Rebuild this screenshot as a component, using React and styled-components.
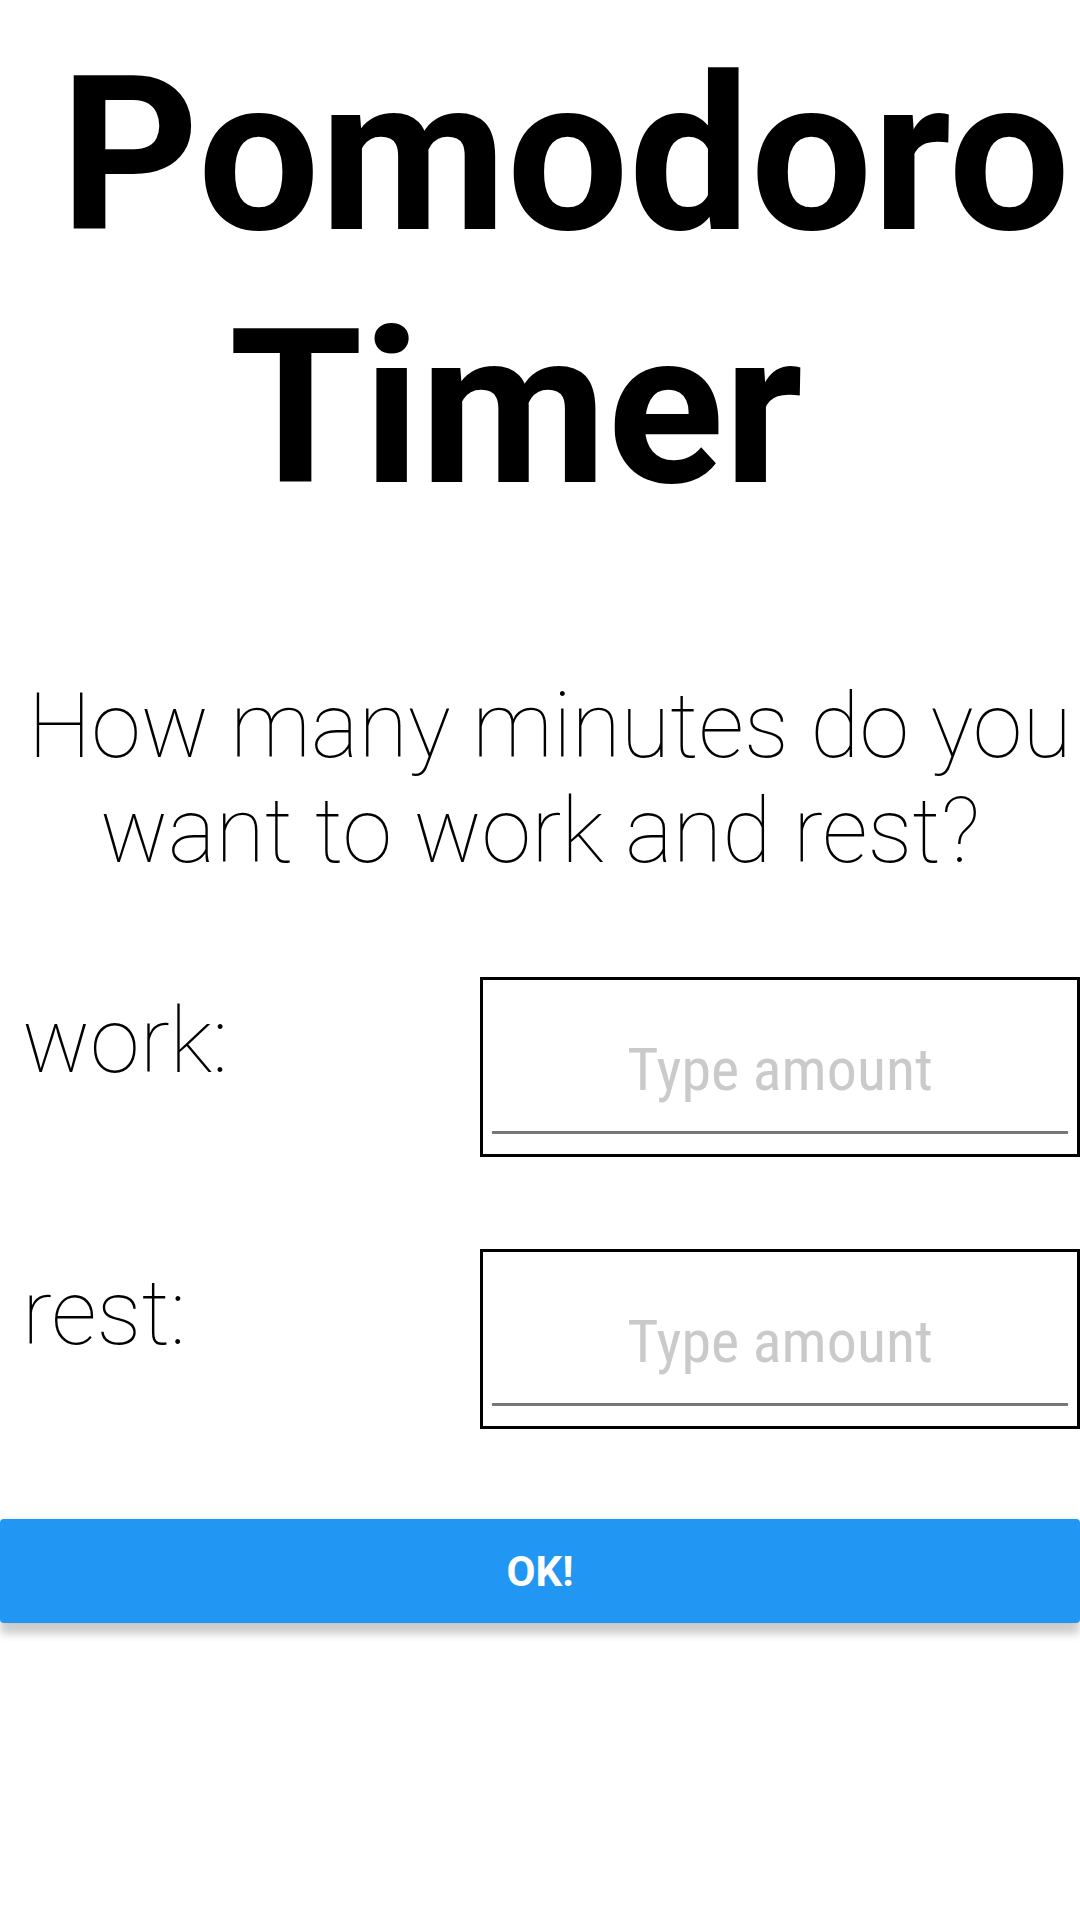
import styled, { createGlobalStyle } from "styled-components";

const GlobalStyle = createGlobalStyle`
  html, body {
    margin: 0;
    padding: 0;
    overflow-x: hidden;
    background: #fff;
    font-family: Roboto, "Liberation Sans", sans-serif;
  }
`;

function AmountRow({ label }) {
  return (
    <Row>
      <Label>{label}</Label>
      <InputFrame>
        <AmountInput type="number" placeholder="Type amount" />
      </InputFrame>
    </Row>
  );
}

function App() {
  return (
    <Page>
      <GlobalStyle />
      <Title>Pomodoro Timer</Title>
      <Question>
        How many minutes do you
        <br />
        want to work and rest?
      </Question>
      <Form>
        <AmountRow label="work:" />
        <AmountRow label="rest:" />
      </Form>
      <OkButton>OK!</OkButton>
    </Page>
  );
}

export default App;

const Page = styled.div`
  width: 1080px;
  min-height: 1920px;
  padding-top: 29px;
  box-sizing: border-box;
`;

const Title = styled.h1`
  margin: 0;
  padding: 0 108px 0 60px;
  font-family: Roboto, "Liberation Sans", sans-serif;
  font-weight: 700;
  font-size: 216px;
  line-height: normal;
  text-align: center;
  color: #000;
`;

const Question = styled.h2`
  margin: 139px 0 0;
  padding: 0 28px;
  white-space: nowrap;
  font-family: Roboto, "Liberation Sans", sans-serif;
  font-weight: 100;
  font-size: 90px;
  line-height: normal;
  text-align: center;
  color: #000;
`;

const Form = styled.div`
  margin-top: 93px;
  display: flex;
  flex-direction: column;
  gap: 92px;
`;

const Row = styled.div`
  display: flex;
  align-items: flex-start;
  padding-left: 22px;
`;

const Label = styled.label`
  flex: 0 0 458px;
  padding-top: 12px;
  font-family: Roboto, "Liberation Sans", sans-serif;
  font-weight: 100;
  font-size: 90px;
  line-height: normal;
  color: #000;
`;

const InputFrame = styled.div`
  flex: 0 0 600px;
  height: 180px;
  box-sizing: border-box;
  border: 3px solid #000;
  padding: 0 9px 20px;
  display: flex;
  align-items: flex-end;
`;

const AmountInput = styled.input`
  width: 100%;
  box-sizing: border-box;
  border: none;
  border-bottom: 3px solid #777;
  padding: 0 0 26px;
  background: transparent;
  outline: none;
  text-align: center;
  font-family: "Roboto Condensed", Roboto, sans-serif;
  font-stretch: condensed;
  font-size: 60px;
  line-height: normal;
  color: #000;
  -moz-appearance: textfield;

  &::-webkit-inner-spin-button,
  &::-webkit-outer-spin-button {
    -webkit-appearance: none;
    margin: 0;
  }

  &::placeholder {
    color: #cacaca;
  }
`;

const OkButton = styled.button`
  display: block;
  width: 100%;
  height: 104px;
  margin-top: 90px;
  border: none;
  border-radius: 4px;
  background: #2196f3;
  color: #fff;
  font-family: Roboto, "Liberation Sans", sans-serif;
  font-weight: 700;
  font-size: 42px;
  box-shadow: 0 11px 8px rgba(0, 0, 0, 0.2), 0 -1px 4px rgba(0, 0, 0, 0.06);
  cursor: pointer;
`;
